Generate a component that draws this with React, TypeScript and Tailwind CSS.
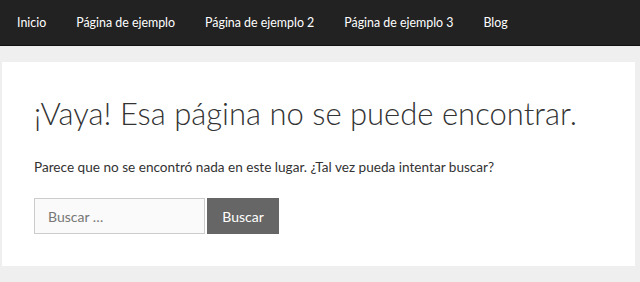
const navItems = ['Inicio', 'Página de ejemplo', 'Página de ejemplo 2', 'Página de ejemplo 3', 'Blog'];

export default function App() {
  return (
    <div className="min-h-[282px] bg-[#efefef] font-['Lato',sans-serif]">
      {/* Navegación */}
      <nav className="h-[46px] bg-[#222222] border-b border-[#111111] flex items-center pl-[17px]">
        <ul className="flex gap-[30px] text-[12.4px] text-white pt-[1px]">
          {navItems.map((item) => (
            <li key={item}>{item}</li>
          ))}
        </ul>
      </nav>

      {/* Contenido */}
      <main className="pt-[16px] pb-[16px] pl-[2px] pr-[5px]">
        <div className="bg-white px-[32px] pt-[31px] h-[204px]">
          <h1 className="text-[31px] leading-[40px] font-light text-[#333333]">
            ¡Vaya! Esa página no se puede encontrar.
          </h1>
          <p className="mt-[24px] text-[13.6px] text-[#333333]">
            Parece que no se encontró nada en este lugar. ¿Tal vez pueda intentar buscar?
          </p>
          <form className="mt-[21px] flex gap-[2px]">
            <input
              type="search"
              placeholder="Buscar …"
              className="w-[171px] h-[36px] border border-[#cccccc] bg-[#fafafa] px-[13px] text-[14px] text-[#666666] placeholder:text-[#777777] outline-none"
            />
            <button type="button" className="w-[72px] h-[36px] bg-[#666666] text-white text-[14px]">
              Buscar
            </button>
          </form>
        </div>
      </main>
    </div>
  );
}
